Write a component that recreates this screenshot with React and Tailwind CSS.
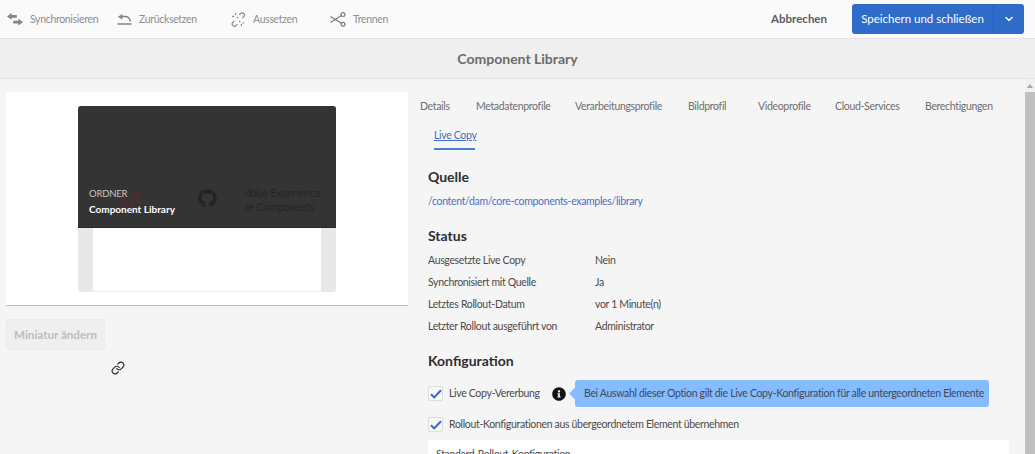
import React from 'react';
import { FaGithub, FaInfoCircle } from 'react-icons/fa';
import { Link as LinkIcon, ChevronDown } from 'lucide-react';

const bodyText = 'text-[10.5px] leading-[15px] tracking-[-0.33px]';
const headingText = 'text-[14px] font-bold leading-[22px] text-[#2e2e2e]';

const tabs = [
    ['Details', 'w-[56px]'],
    ['Metadatenprofile', 'w-[99px]'],
    ['Verarbeitungsprofile', 'w-[113px]'],
    ['Bildprofil', 'w-[70px]'],
    ['Videoprofile', 'w-[77px]'],
    ['Cloud-Services', 'w-[90px]'],
    ['Berechtigungen', 'w-[90px]'],
];

const statusRows = [
    ['Ausgesetzte Live Copy', 'Nein'],
    ['Synchronisiert mit Quelle', 'Ja'],
    ['Letztes Rollout-Datum', 'vor 1 Minute(n)'],
    ['Letzter Rollout ausgeführt von', 'Administrator'],
];

function SyncGlyph() {
    return (
        <svg width="16" height="13" viewBox="0 0 16 13" aria-hidden="true" fill="#858585">
            <path d="M0 3.4 4.6 0v2h5.2v2.8H4.6v2z" />
            <path d="M16 9.2 11.4 5.8v2H6.2v2.8h5.2v2z" />
        </svg>
    );
}

function UndoGlyph() {
    return (
        <svg width="15" height="11" viewBox="0 0 15 11" aria-hidden="true" fill="none" stroke="#858585">
            <path d="M13.5 7.6C12.8 4 10.5 2.6 8 2.6H4.5" strokeWidth="1.5" />
            <path d="M5.4 0 .8 2.8l4.6 3z" fill="#858585" stroke="none" />
            <path d="M.5 10h14" strokeWidth="1.5" />
        </svg>
    );
}

function BrokenLinkGlyph() {
    return (
        <svg width="15" height="15" viewBox="0 0 15 15" aria-hidden="true" fill="none" stroke="#8a8a8a" strokeWidth="1.2">
            <path d="M8.2 2.8 9.6 1.5a2.2 2.2 0 0 1 3.2 3.1L11.2 6.2" />
            <path d="M6.5 12.3 5 13.6a2.2 2.2 0 0 1-3.2-3.1l1.6-1.6" />
            <path d="M4.6 1v2M1 4.4h2M11.2 11h2M10.4 12v2M6 6.2 7 5M8.2 10l1-1.2" />
        </svg>
    );
}

function ScissorsGlyph() {
    return (
        <svg width="16" height="15" viewBox="0 0 16 15" aria-hidden="true" fill="none" stroke="#7d7d7d" strokeWidth="1.2">
            <circle cx="13" cy="2.6" r="1.9" />
            <circle cx="13" cy="12.2" r="1.9" />
            <path d="M11.4 3.6.5 10.6M11.4 11.2.5 4.4" />
        </svg>
    );
}

function AdobeGlyph() {
    return (
        <svg className="absolute left-[44px] top-[86px]" width="18" height="18" viewBox="0 0 18 18" aria-hidden="true" fill="#552a2a">
            <path d="M0 0h6.5L0 16z" />
            <path d="M18 0h-6.5L18 16z" />
            <path d="M9 6l4.6 11h-3l-1.3-3.3H6z" />
        </svg>
    );
}

function ToolbarItem({ glyph, label, className }) {
    return (
        <div className={`flex items-center ${className}`}>
            <div className="flex w-[16px] justify-center">{glyph}</div>
            <span className={`ml-[7px] text-[#8e8e8e] ${bodyText}`}>{label}</span>
        </div>
    );
}

function Check() {
    return (
        <div className="flex h-[15px] w-[15px] shrink-0 items-center justify-center rounded-[2px] border border-[#dcdcdc] bg-[#f7f7f7]">
            <svg width="12" height="10" viewBox="0 0 12 10" aria-hidden="true" fill="none" stroke="#2d6ccb" strokeWidth="2">
                <path d="M1 5.2 4.2 8.4 11 1.2" />
            </svg>
        </div>
    );
}

function Thumbnail() {
    return (
        <div className="mx-auto flex h-[186px] w-[258px] flex-col overflow-hidden rounded-[3px] bg-[#e8e8e8]">
            <div className="relative h-[122px] border-b border-[#262626] bg-[#343434]">
                <AdobeGlyph />
                <FaGithub className="absolute left-[120px] top-[83px] text-[#232323]" size={19} />
                <div className="absolute left-[167px] top-[80px] w-[78px] overflow-hidden whitespace-nowrap text-[10.5px] leading-[14px] tracking-[-0.1px] text-[#262626]">
                    <div>dobe Experience</div>
                    <div>re Components</div>
                </div>
                <span className="absolute left-[11px] top-[81px] text-[9.5px] tracking-[-0.2px] text-[#c6c6c6]">ORDNER</span>
                <span className="absolute left-[11px] top-[96px] text-[10px] font-bold text-white">Component Library</span>
            </div>
            <div className="mx-[15px] flex-1 border-b border-[#f0f0f0] bg-white" />
        </div>
    );
}

export default function App() {
    return (
        <div className="flex h-[454px] flex-col overflow-hidden bg-[#f5f5f5] font-['Lato','Noto_Sans',sans-serif] text-[#4b4b4b]">
            <header className="flex h-[39px] shrink-0 items-center border-b border-[#e3e3e3] bg-[#fafafa] pl-[7px] pr-[11px]">
                <ToolbarItem glyph={<SyncGlyph />} label="Synchronisieren" className="w-[109px]" />
                <ToolbarItem glyph={<UndoGlyph />} label="Zurücksetzen" className="w-[114px]" />
                <ToolbarItem glyph={<BrokenLinkGlyph />} label="Aussetzen" className="w-[100px]" />
                <ToolbarItem glyph={<ScissorsGlyph />} label="Trennen" className="w-[80px]" />
                <span className="ml-auto mr-[25px] text-[11.5px] font-bold text-[#5c5c5c]">Abbrechen</span>
                <div className="flex h-[30px] w-[172px] rounded-[3px] bg-[#2f6bc8] text-white">
                    <div className="flex flex-1 items-center justify-center border-r border-[#2a5fb3] text-[11.5px]">Speichern und schließen</div>
                    <div className="flex w-[30px] items-center justify-center">
                        <ChevronDown size={12} strokeWidth={3} />
                    </div>
                </div>
            </header>

            <div className="flex h-[40px] shrink-0 items-center justify-center border-b border-[#e3e3e3] bg-[#efefef] text-[14px] font-bold text-[#6b6b6b]">
                Component Library
            </div>

            <div className="flex min-h-0 flex-1">
                <aside className="w-[408px] shrink-0 pl-[6px] pt-[13px]">
                    <div className="h-[214px] border-b border-[#bdbdbd] bg-white pt-[14px]">
                        <Thumbnail />
                    </div>
                    <button
                        type="button"
                        className="mt-[13px] block h-[31px] w-[99px] rounded-[3px] border border-[#ebebeb] bg-[#efefef] text-[11.6px] font-bold text-[#bdbdbd]"
                    >
                        Miniatur ändern
                    </button>
                    <LinkIcon className="ml-[105px] mt-[11px] text-[#2a2a2a]" size={14} strokeWidth={2} />
                </aside>

                <main className="min-w-0 flex-1 pl-[12px]">
                    <div className={`flex pt-[20px] text-[#6e6e6e] ${bodyText}`}>
                        {tabs.map(([label, width]) => (
                            <span key={label} className={`${width} shrink-0 whitespace-nowrap`}>{label}</span>
                        ))}
                    </div>
                    <div className={`ml-[14px] mt-[14px] w-[41px] whitespace-nowrap border-b-2 border-[#4a7ecf] pb-[5px] text-[#3f6fc4] underline ${bodyText}`}>
                        Live Copy
                    </div>

                    <section className="ml-[8px] w-[581px]">
                        <h2 className={`mt-[16px] ${headingText}`}>Quelle</h2>
                        <p className={`mt-[6px] text-[#4a72c0] ${bodyText}`}>/content/dam/core-components-examples/library</p>

                        <h2 className={`mt-[16px] ${headingText}`}>Status</h2>
                        <div className={`mt-[6px] flex flex-col gap-[7px] ${bodyText}`}>
                            {statusRows.map(([label, value]) => (
                                <div key={label} className="flex">
                                    <span className="w-[167px] shrink-0">{label}</span>
                                    <span>{value}</span>
                                </div>
                            ))}
                        </div>

                        <h2 className={`mt-[16px] ${headingText}`}>Konfiguration</h2>
                        <div className="mt-[8px] flex h-[27px] items-center">
                            <Check />
                            <span className={`ml-[6px] w-[103px] shrink-0 whitespace-nowrap ${bodyText}`}>Live Copy-Vererbung</span>
                            <FaInfoCircle className="shrink-0 text-[#111111]" size={14} />
                            <div className={`relative ml-[9px] flex h-[27px] w-[414px] shrink-0 items-center whitespace-nowrap rounded-[3px] bg-[#85bbff] pl-[9px] text-[#3e4a5a] ${bodyText}`}>
                                <span className="absolute -left-[4px] top-[9px] h-[9px] w-[9px] rotate-45 bg-[#85bbff]" />
                                <span className="relative">Bei Auswahl dieser Option gilt die Live Copy-Konfiguration für alle untergeordneten Elemente</span>
                            </div>
                        </div>
                        <div className="mt-[10px] flex items-center">
                            <Check />
                            <span className={`ml-[6px] ${bodyText}`}>Rollout-Konfigurationen aus übergeordnetem Element übernehmen</span>
                        </div>
                        <div className={`mt-[8px] h-[40px] bg-white px-[8px] pt-[7px] ${bodyText}`}>Standard-Rollout-Konfiguration</div>
                    </section>
                </main>

                <div className="flex w-[10px] shrink-0 flex-col bg-[#f1f1f1]">
                    <div className="flex h-[13px] items-center justify-center">
                        <span className="h-0 w-0 border-x-[3px] border-b-[4px] border-x-transparent border-b-[#a3a3a3]" />
                    </div>
                    <div className="flex-1 bg-[#bfbfbf]" />
                </div>
            </div>
        </div>
    );
}
